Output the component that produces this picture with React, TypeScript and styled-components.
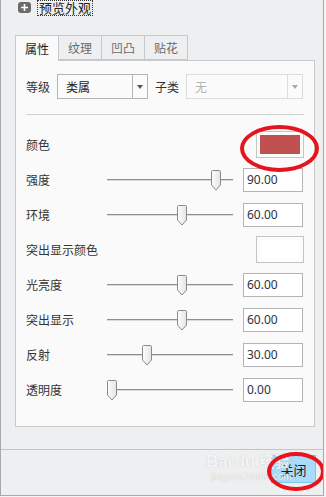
import styled, { createGlobalStyle } from "styled-components";

interface SliderRow {
  label: string;
  value: number;
}

const sliderRows: SliderRow[] = [
  { label: "强度", value: 90 },
  { label: "环境", value: 60 },
];

const lowerRows: SliderRow[] = [
  { label: "光亮度", value: 60 },
  { label: "突出显示", value: 60 },
  { label: "反射", value: 30 },
  { label: "透明度", value: 0 },
];

const tabs = ["属性", "纹理", "凹凸", "贴花"];

const GlobalStyle = createGlobalStyle`
  body {
    margin: 0;
    background: #f4f4f4;
    font-family: "Noto Sans", "Noto Sans CJK SC", sans-serif;
  }
`;

const Frame = styled.div({
  position: "relative",
  width: "322px",
  height: "495px",
  background: "#eeeff1",
  borderLeft: "1px solid #a8a8a8",
  borderRight: "1px solid #a8a8a8",
  borderBottom: "1px solid #a8a8a8",
  display: "flex",
  flexDirection: "column",
  overflow: "hidden",
});

const Header = styled.div({
  display: "flex",
  alignItems: "center",
  height: "16px",
  paddingLeft: "17px",
  gap: "6px",
  marginBottom: "19px",
});

const PlusIcon = styled.div({
  width: "13px",
  height: "11px",
  borderRadius: "3px",
  background: "#6b6b6b",
  display: "flex",
  alignItems: "center",
  justifyContent: "center",
  marginTop: "-2px",
});

const Title = styled.span({
  fontFamily: '"Noto Sans CJK SC", sans-serif',
  fontSize: "13px",
  color: "#222",
  lineHeight: "14px",
  padding: "0 1px",
  border: "1px dotted #333",
  marginTop: "-1px",
});

const TabBar = styled.div({
  display: "flex",
  height: "25px",
  marginLeft: "14px",
  alignItems: "flex-start",
});

const Tab = styled.div<{ $active?: boolean }>(({ $active }) => ({
  position: "relative",
  zIndex: $active ? 1 : 0,
  boxSizing: "border-box",
  width: "44px",
  height: $active ? "26px" : "25px",
  marginLeft: "-1px",
  border: "1px solid #c9c9c9",
  borderBottom: $active ? "none" : "1px solid #c9c9c9",
  background: $active ? "#fafafa" : "#eeeff1",
  color: $active ? "#1a1a1a" : "#6a6a6a",
  fontFamily: '"Noto Sans CJK SC", sans-serif',
  fontSize: "12px",
  display: "flex",
  alignItems: "center",
  justifyContent: "center",
  paddingBottom: $active ? "1px" : "0",
  "&:first-child": { marginLeft: 0 },
}));

const Panel = styled.div({
  boxSizing: "border-box",
  width: "300px",
  height: "367px",
  marginLeft: "14px",
  border: "1px solid #c9c9c9",
  background: "#fafafa",
  padding: "13px 10px 0 10px",
});

const ClassRow = styled.div({
  display: "flex",
  alignItems: "center",
  height: "25px",
  gap: "7px",
});

const Label = styled.span({
  fontFamily: '"Noto Sans CJK SC", sans-serif',
  fontSize: "12px",
  color: "#333",
  whiteSpace: "nowrap",
});

const Select = styled.div<{ $width: number; $disabled?: boolean }>(
  ({ $width, $disabled }) => ({
    boxSizing: "border-box",
    width: `${$width}px`,
    height: "25px",
    border: `1px solid ${$disabled ? "#dcdcdc" : "#b4b4b4"}`,
    background: "#fbfbfb",
    display: "flex",
  })
);

const SelectText = styled.div<{ $disabled?: boolean }>(({ $disabled }) => ({
  flex: 1,
  display: "flex",
  alignItems: "center",
  paddingLeft: "8px",
  fontFamily: '"Noto Sans CJK SC", sans-serif',
  fontSize: "12px",
  color: $disabled ? "#b4b4b4" : "#222",
}));

const SelectArrow = styled.div<{ $disabled?: boolean }>(({ $disabled }) => ({
  width: "14px",
  borderLeft: `1px solid ${$disabled ? "#dcdcdc" : "#b4b4b4"}`,
  display: "flex",
  alignItems: "center",
  justifyContent: "center",
  "&::after": {
    content: '""',
    borderLeft: "3.5px solid transparent",
    borderRight: "3.5px solid transparent",
    borderTop: `4px solid ${$disabled ? "#a8a8a8" : "#555"}`,
  },
}));

const Divider = styled.div({
  height: "1px",
  background: "#cfcfcf",
  margin: "15px 0 12px 0",
});

const PropRow = styled.div({
  display: "flex",
  alignItems: "center",
  height: "35px",
});

const RowLabel = styled(Label)({
  width: "81px",
  flexShrink: 0,
});

const Track = styled.div({
  position: "relative",
  width: "126px",
  height: "20px",
  flexShrink: 0,
  "&::before": {
    content: '""',
    position: "absolute",
    left: 0,
    right: 0,
    top: "9px",
    height: "1px",
    background: "#8e8e8e",
    borderBottom: "1px solid #dadada",
  },
});

const Thumb = styled.svg({
  position: "absolute",
  top: 0,
  width: "10px",
  height: "21px",
  marginLeft: "-5px",
});

const ValueBox = styled.div({
  boxSizing: "border-box",
  width: "60px",
  height: "24px",
  marginLeft: "10px",
  border: "1px solid #b4b4b4",
  background: "#fff",
  display: "flex",
  alignItems: "center",
  paddingLeft: "3px",
  fontFamily: '"Noto Sans", sans-serif',
  fontSize: "12px",
  color: "#2b3340",
});

const Swatch = styled.div<{ $color: string }>(({ $color }) => ({
  boxSizing: "border-box",
  width: "48px",
  height: "27px",
  marginLeft: "auto",
  border: "1px solid #c4c4c4",
  background: "#fcfcfc",
  padding: "3px",
  "&::after": {
    content: '""',
    display: "block",
    width: "100%",
    height: "100%",
    background: $color,
  },
}));

const Footer = styled.div({
  marginTop: "22px",
  borderTop: "1px solid #c4c4c4",
  display: "flex",
  justifyContent: "flex-end",
  padding: "5px 7px 0 0",
});

const CloseButton = styled.button({
  boxSizing: "border-box",
  width: "45px",
  height: "28px",
  border: "1px solid #7cc4f0",
  background: "#a9dbfa",
  fontFamily: '"Noto Sans CJK SC", sans-serif',
  fontSize: "13px",
  color: "#1a1a1a",
  padding: 0,
});

const Ring = styled.div<{ $x: number; $y: number; $w: number; $h: number }>(
  ({ $x, $y, $w, $h }) => ({
    position: "absolute",
    left: `${$x}px`,
    top: `${$y}px`,
    width: `${$w}px`,
    height: `${$h}px`,
    boxSizing: "border-box",
    border: "4px solid #e5141d",
    borderRadius: "50%",
    pointerEvents: "none",
    zIndex: 3,
  })
);

const Watermark = styled.div({
  position: "absolute",
  left: "205px",
  top: "451px",
  zIndex: 2,
  pointerEvents: "none",
  color: "rgba(255,255,255,0.85)",
  textShadow: "0 0 1px rgba(120,120,120,0.45)",
  display: "flex",
  flexDirection: "column",
  alignItems: "flex-start",
});

const MarkTop = styled.div({
  display: "flex",
  alignItems: "baseline",
  fontFamily: '"Liberation Sans", sans-serif',
  fontWeight: 700,
  fontSize: "17px",
  lineHeight: "19px",
  gap: "2px",
});

const MarkCn = styled.span({
  fontFamily: '"Noto Sans CJK SC", sans-serif',
  fontSize: "15px",
  fontWeight: 700,
  marginLeft: "2px",
});

const MarkUrl = styled.div({
  fontFamily: '"Liberation Sans", sans-serif',
  fontSize: "10px",
  lineHeight: "11px",
  marginLeft: "5px",
});

function thumbLeft(value: number) {
  return 5 + (value / 100) * 116;
}

const SliderThumb = ({ value }: { value: number }) => (
  <Thumb style={{ left: thumbLeft(value) }} viewBox="0 0 10 21">
    <defs>
      <linearGradient id="tg" x1="0" x2="1" y1="0" y2="0">
        <stop offset="0" stopColor="#fdfdfd" />
        <stop offset="1" stopColor="#e4e4e4" />
      </linearGradient>
    </defs>
    <path
      d="M0.5 1.5 Q0.5 0.5 1.5 0.5 L8.5 0.5 Q9.5 0.5 9.5 1.5 L9.5 15 L5 20 L0.5 15 Z"
      fill="url(#tg)"
      stroke="#8a8a8a"
      strokeWidth="1"
    />
  </Thumb>
);

const Slider = ({ label, value }: SliderRow) => (
  <PropRow>
    <RowLabel>{label}</RowLabel>
    <Track>
      <SliderThumb value={value} />
    </Track>
    <ValueBox>{value.toFixed(2)}</ValueBox>
  </PropRow>
);

export default function App() {
  return (
    <>
      <GlobalStyle />
      <Frame>
        <Header>
          <PlusIcon>
            <svg width="9" height="9" viewBox="0 0 9 9">
              <path d="M4.5 1 V8 M1 4.5 H8" stroke="#fff" strokeWidth="1.6" />
            </svg>
          </PlusIcon>
          <Title>预览外观</Title>
        </Header>

        <TabBar>
          {tabs.map((t, i) => (
            <Tab key={t} $active={i === 0}>
              {t}
            </Tab>
          ))}
        </TabBar>

        <Panel>
          <ClassRow>
            <Label>等级</Label>
            <Select $width={91}>
              <SelectText>类属</SelectText>
              <SelectArrow />
            </Select>
            <Label>子类</Label>
            <Select $width={117} $disabled>
              <SelectText $disabled>无</SelectText>
              <SelectArrow $disabled />
            </Select>
          </ClassRow>

          <Divider />

          <PropRow>
            <RowLabel>颜色</RowLabel>
            <Swatch $color="#c0504d" />
          </PropRow>
          {sliderRows.map((r) => (
            <Slider key={r.label} {...r} />
          ))}
          <PropRow>
            <RowLabel>突出显示颜色</RowLabel>
            <Swatch $color="#ffffff" />
          </PropRow>
          {lowerRows.map((r) => (
            <Slider key={r.label} {...r} />
          ))}
        </Panel>

        <Footer>
          <CloseButton>关闭</CloseButton>
        </Footer>

        <Watermark>
          <MarkTop>
            <span>Bai</span>
            <span>du</span>
            <MarkCn>经验</MarkCn>
          </MarkTop>
          <MarkUrl>jingyan.baidu.com</MarkUrl>
        </Watermark>

        <Ring $x={239} $y={125} $w={79} $h={47} />
        <Ring $x={266} $y={452} $w={58} $h={39} />
      </Frame>
    </>
  );
}
